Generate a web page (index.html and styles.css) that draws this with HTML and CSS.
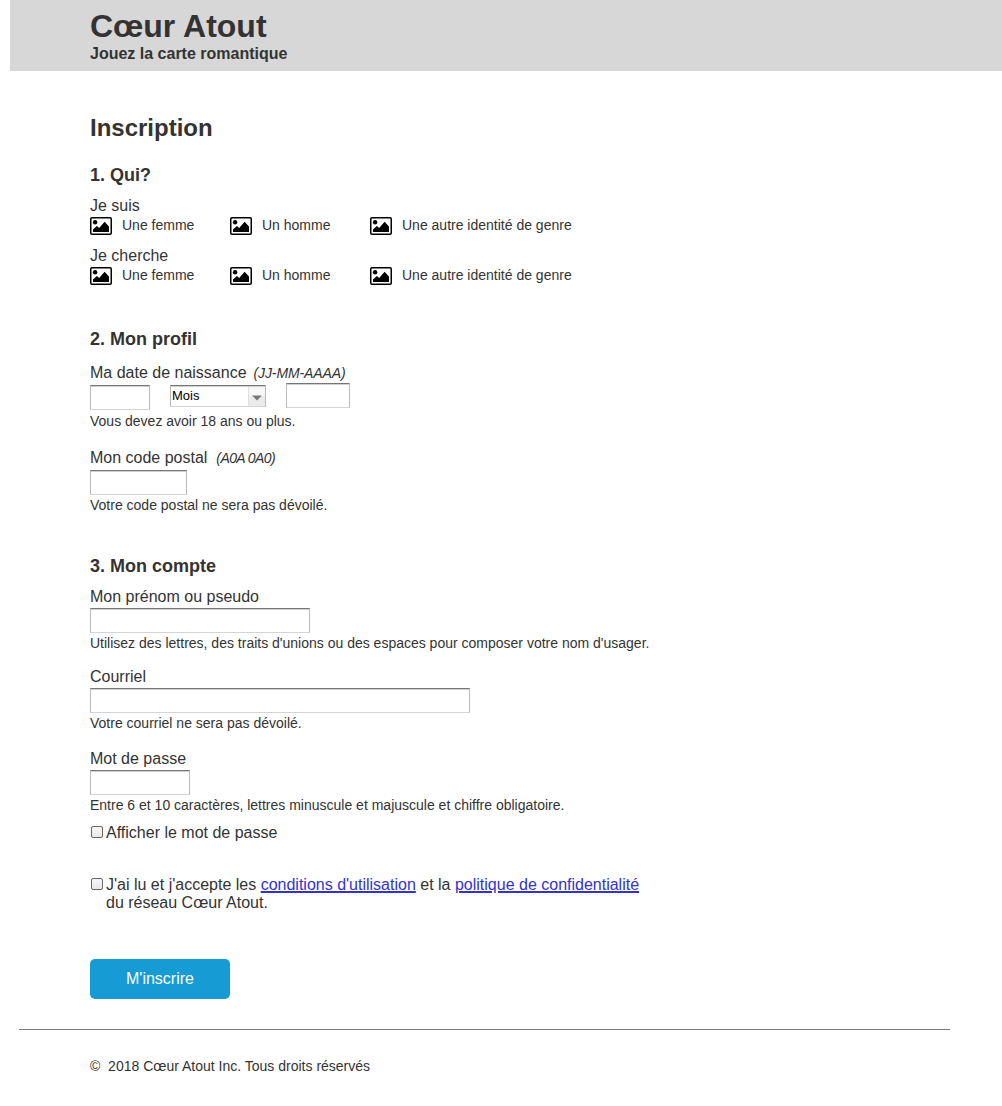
FILE: index.html
```html
<!DOCTYPE html>
<html lang="fr">
<head>
<meta charset="utf-8">
<title>Cœur Atout - Inscription</title>
<link rel="stylesheet" href="styles.css">
</head>
<body>
<svg width="0" height="0" class="defs">
  <symbol id="picture" viewBox="0 0 22 18">
    <rect x=".75" y=".75" width="20.5" height="16.5" rx="1.2" fill="#fff" stroke="#000" stroke-width="1.5"/>
    <circle cx="5.1" cy="5.3" r="2.2"/>
    <path d="M3 15v-2.6l3.9-3.5 2.3 2.1 5.4-6.2L19 9.6V15z"/>
  </symbol>
</svg>
<header class="banner">
  <h1 class="brand">Cœur Atout</h1>
  <p class="tagline">Jouez la carte romantique</p>
</header>
<main class="page">
  <h2 class="title">Inscription</h2>
  <form>
    <section class="who">
      <h3 class="heading">1. Qui?</h3>
      <div class="label">Je suis</div>
      <div class="choices">
        <span class="choice"><svg class="icon"><use href="#picture"/></svg>Une femme</span>
        <span class="choice"><svg class="icon"><use href="#picture"/></svg>Un homme</span>
        <span class="choice"><svg class="icon"><use href="#picture"/></svg>Une autre identité de genre</span>
      </div>
      <div class="label">Je cherche</div>
      <div class="choices">
        <span class="choice"><svg class="icon"><use href="#picture"/></svg>Une femme</span>
        <span class="choice"><svg class="icon"><use href="#picture"/></svg>Un homme</span>
        <span class="choice"><svg class="icon"><use href="#picture"/></svg>Une autre identité de genre</span>
      </div>
    </section>
    <section class="profile">
      <h3 class="heading">2. Mon profil</h3>
      <div class="label">Ma date de naissance <em class="format">(JJ-MM-AAAA)</em></div>
      <div class="date">
        <input class="field day" type="text">
        <div class="select"><span class="month">Mois</span><span class="arrow"><svg width="10" height="6" viewBox="0 0 10 6"><path d="M0 .5h10L5 5.5z" fill="#777"/></svg></span></div>
        <input class="field year" type="text">
      </div>
      <p class="hint">Vous devez avoir 18 ans ou plus.</p>
      <div class="label postal-label">Mon code postal <em class="format postal-format">(A0A 0A0)</em></div>
      <input class="field postal" type="text">
      <p class="hint">Votre code postal ne sera pas dévoilé.</p>
    </section>
    <section class="account">
      <h3 class="heading">3. Mon compte</h3>
      <div class="label">Mon prénom ou pseudo</div>
      <input class="field name" type="text">
      <p class="hint">Utilisez des lettres, des traits d'unions ou des espaces pour composer votre nom d'usager.</p>
      <div class="label email-label">Courriel</div>
      <input class="field email" type="text">
      <p class="hint">Votre courriel ne sera pas dévoilé.</p>
      <div class="label password-label">Mot de passe</div>
      <input class="field password" type="text">
      <p class="hint">Entre 6 et 10 caractères, lettres minuscule et majuscule et chiffre obligatoire.</p>
      <label class="check"><input class="box" type="checkbox"><span>Afficher le mot de passe</span></label>
      <label class="check terms"><input class="box" type="checkbox"><span>J'ai lu et j'accepte les <a href="#">conditions d'utilisation</a> et la <a href="#">politique de confidentialité</a><br>du réseau Cœur Atout.</span></label>
    </section>
    <button class="submit" type="button">M'inscrire</button>
  </form>
</main>
<footer class="footer">©&nbsp; 2018 Cœur Atout Inc. Tous droits réservés</footer>
</body>
</html>
```
FILE: styles.css
```css
* { box-sizing: border-box; margin: 0; padding: 0; }
body {
  background: #fff;
  color: #333;
  font: 16px/18px "Liberation Sans", Arial, sans-serif;
}
.defs { display: block; }
.banner {
  height: 71px;
  margin-left: 10px;
  padding: 8px 0 0 80px;
  background: #d7d7d7;
}
.brand { font-size: 32px; line-height: 36px; }
.tagline { padding-top: 1px; font-weight: bold; }
.page { padding: 43px 0 0 90px; }
.title { font-size: 24px; line-height: 27px; }
.heading { font-size: 18px; line-height: 20px; }
.who { padding-top: 24px; }
.who .heading { margin-bottom: 11px; }
.choices {
  display: grid;
  grid-template-columns: 140px 140px auto;
  height: 18px;
  margin: 3px 0 11px;
}
.choice { display: flex; gap: 10px; font-size: 14px; line-height: 16px; }
.icon { width: 22px; height: 18px; }
.profile { padding-top: 33px; }
.profile .heading { margin-bottom: 14px; }
.label { height: 18px; line-height: 20px; }
.format { margin-left: 2.5px; font-size: 14px; letter-spacing: -.1px; }
.postal-format { margin-left: 4.5px; letter-spacing: -.6px; }
.field {
  display: block;
  height: 25px;
  margin-top: 3px;
  border: 1px solid #b9b9b9;
  border-top: 1px solid #757575;
  border-bottom-color: #d4d4d4;
  background: #fff;
  box-shadow: inset 0 1px #d0d0d0;
}
.date { display: flex; align-items: flex-start; gap: 20px; height: 29px; padding-top: 2px; }
.date .field { margin: 2px 0 0; }
.date .year { width: 64px; margin: 0; }
.day { width: 60px; }
.select {
  display: flex;
  justify-content: space-between;
  width: 96px;
  height: 22px;
  margin-top: 2px;
  padding: 1px 0 0 1px;
  border: 1px solid #b9b9b9;
  border-top-color: #757575;
  border-bottom-color: #d4d4d4;
  box-shadow: inset 0 1px #d0d0d0;
  color: #000;
  font-size: 13px;
}
.arrow {
  display: flex;
  align-items: center;
  justify-content: center;
  width: 17px;
  padding-top: 2px;
  border-left: 1px solid #e0e0e0;
  background: linear-gradient(#f7f7f7 50%, #ebebeb 50%);
}
.hint { margin-top: 2px; font-size: 14px; line-height: 16px; }
.date + .hint { margin-top: 3px; }
.postal-label { margin-top: 19px; }
.postal { width: 97px; margin-top: 4px; }
.account { padding-top: 43px; }
.account .heading { margin-bottom: 11px; }
.name { width: 220px; }
.email-label { margin-top: 16px; }
.email { width: 380px; }
.password-label { margin-top: 18px; }
.password { width: 100px; }
.check { display: flex; gap: 3px; margin-top: 11px; padding-left: 1px; }
.terms { margin-top: 34px; }
.box {
  appearance: none;
  width: 12px;
  height: 12px;
  margin-top: 2px;
  border: 1px solid #666;
  border-radius: 2px;
  background: linear-gradient(#f8f8f8, #e8e8e8);
}
a { color: #33c; text-decoration-thickness: 2px; text-underline-offset: 1px; }
.submit {
  display: block;
  width: 140px;
  height: 40px;
  margin-top: 47px;
  border: 0;
  border-radius: 5px;
  background: #169bd5;
  color: #fff;
  font: inherit;
}
.footer {
  width: 931px;
  margin: 30px 0 0 19px;
  padding: 28px 0 0 71px;
  border-top: 1px solid #797979;
  font-size: 14px;
  line-height: 16px;
}
```
